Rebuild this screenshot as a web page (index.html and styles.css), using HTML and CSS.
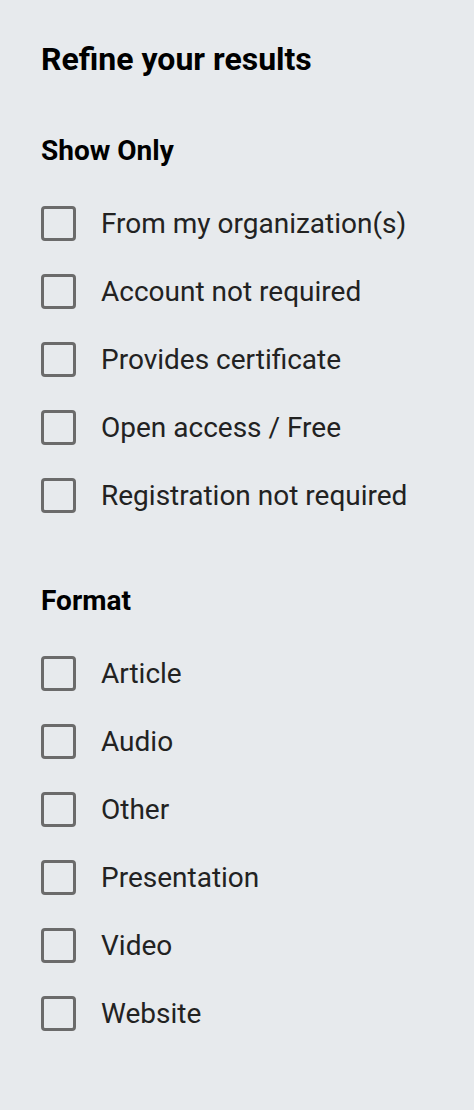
FILE: index.html
```html
<!DOCTYPE html>
<html>
<head>
<meta charset="utf-8">
<link rel="stylesheet" href="styles.css">
</head>
<body>
<aside class="filters">
  <h1 class="title">Refine your results</h1>
  <section class="group">
    <h2 class="group-title">Show Only</h2>
    <ul class="options">
      <li class="option"><span class="box"></span><span class="label">From my organization(s)</span></li>
      <li class="option"><span class="box"></span><span class="label">Account not required</span></li>
      <li class="option"><span class="box"></span><span class="label">Provides certificate</span></li>
      <li class="option"><span class="box"></span><span class="label">Open access / Free</span></li>
      <li class="option"><span class="box"></span><span class="label">Registration not required</span></li>
    </ul>
  </section>
  <section class="group group-second">
    <h2 class="group-title">Format</h2>
    <ul class="options">
      <li class="option"><span class="box"></span><span class="label">Article</span></li>
      <li class="option"><span class="box"></span><span class="label">Audio</span></li>
      <li class="option"><span class="box"></span><span class="label">Other</span></li>
      <li class="option"><span class="box"></span><span class="label">Presentation</span></li>
      <li class="option"><span class="box"></span><span class="label">Video</span></li>
      <li class="option"><span class="box"></span><span class="label">Website</span></li>
    </ul>
  </section>
</aside>
</body>
</html>
```

FILE: styles.css
```css
html, body {
  margin: 0;
  padding: 0;
  background: #e7eaed;
}
body {
  font-family: Roboto, "Liberation Sans", Arial, sans-serif;
  color: #000;
}
.filters {
  padding: 40px 0 0 41px;
}
.title {
  margin: 0;
  font-size: 32px;
  line-height: 38px;
  font-weight: 700;
  color: #000;
}
.group {
  margin-top: 56px;
}
.group-second {
  margin-top: 55px;
}
.group-title {
  margin: 0;
  font-size: 28px;
  line-height: 34px;
  font-weight: 700;
  color: #000;
}
.options {
  list-style: none;
  margin: 21px 0 0 0;
  padding: 0;
}
.option {
  height: 68px;
  display: flex;
  align-items: center;
  gap: 25px;
}
.box {
  box-sizing: border-box;
  width: 35px;
  height: 35px;
  border: 3px solid #6b6b6b;
  border-radius: 4px;
  flex: none;
}
.label {
  font-size: 28px;
  color: #222;
}
```
